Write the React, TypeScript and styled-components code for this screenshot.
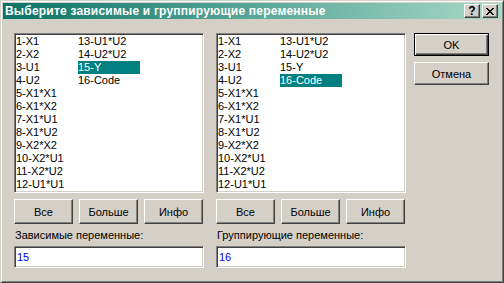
import React from "react";
import styled, { createGlobalStyle } from "styled-components";

const Global = createGlobalStyle`
  html, body { margin: 0; padding: 0; background: #d4d0c8; }
  body { font-family: "Liberation Sans", Arial, sans-serif; font-size: 11px; color: #000; }
`;

const Window = styled.div`
  box-sizing: border-box;
  width: 504px;
  height: 283px;
  background: #d4d0c8;
  border: 1px solid;
  border-color: #d4d0c8 #404040 #404040 #d4d0c8;
  box-shadow: inset 1px 1px #fff, inset -1px -1px #808080;
  padding: 2px;
  display: flex;
  flex-direction: column;
`;

const TitleBar = styled.div`
  height: 16px;
  flex: none;
  display: flex;
  align-items: center;
  padding: 0 3px 0 2px;
  background: linear-gradient(to right, #0a7367, #a8d9c7);
  color: #fff;
  font-family: "Liberation Sans", Arial, sans-serif;
  font-weight: bold;
  font-size: 12px;
  letter-spacing: 0.2px;
`;

const Title = styled.span`
  flex: 1;
  white-space: nowrap;
`;

const CapButton = styled.div<{ $gap?: boolean }>`
  box-sizing: border-box;
  width: 16px;
  height: 14px;
  background: #d4d0c8;
  border: 1px solid;
  border-color: #fff #404040 #404040 #fff;
  box-shadow: inset -1px -1px #808080;
  display: flex;
  align-items: center;
  justify-content: center;
  color: #000;
  font-family: "Liberation Sans", Arial, sans-serif;
  font-weight: bold;
  font-size: 12px;
  letter-spacing: 0;
  line-height: 1;
  margin-left: ${(p) => (p.$gap ? "2px" : "0")};
`;

const Body = styled.div`
  flex: 1;
  display: flex;
  align-items: flex-start;
  padding: 14px 0 0 11px;
  gap: 8px;
`;

const Panels = styled.div`
  display: flex;
  gap: 12px;
`;

const Column = styled.div`
  width: 190px;
  display: flex;
  flex-direction: column;
`;

const ListBox = styled.div`
  box-sizing: border-box;
  height: 160px;
  background: #fff;
  border: 1px solid;
  border-color: #808080 #fff #fff #808080;
  box-shadow: inset 1px 1px #404040, inset -1px -1px #d4d0c8;
  padding: 1px;
  display: grid;
  grid-auto-flow: column;
  grid-template-rows: repeat(12, 13px);
  grid-auto-columns: 62px;
  align-content: start;
  justify-content: start;
`;

const Item = styled.div<{ $sel?: boolean }>`
  height: 13px;
  line-height: 13px;
  white-space: nowrap;
  background: ${(p) => (p.$sel ? "#008080" : "transparent")};
  color: ${(p) => (p.$sel ? "#fff" : "#000")};
`;

const ButtonRow = styled.div`
  display: flex;
  gap: 6px;
  margin-top: 6px;
`;

const Button = styled.button<{ $w: number; $h: number; $default?: boolean }>`
  box-sizing: border-box;
  width: ${(p) => p.$w}px;
  height: ${(p) => p.$h}px;
  padding: 0;
  margin: 0;
  background: #d4d0c8;
  font-family: "Liberation Sans", Arial, sans-serif;
  font-size: 11px;
  color: #000;
  border: 1px solid;
  border-color: ${(p) => (p.$default ? "#000" : "#fff #404040 #404040 #fff")};
  box-shadow: ${(p) =>
    p.$default
      ? "inset 1px 1px #fff, inset -1px -1px #404040, inset -2px -2px #808080"
      : "inset -1px -1px #808080"};
`;

const Label = styled.div`
  margin-top: 5px;
  height: 13px;
  line-height: 13px;
  padding-left: 1px;
  white-space: nowrap;
`;

const Input = styled.div`
  box-sizing: border-box;
  margin-top: 4px;
  height: 22px;
  background: #fff;
  border: 1px solid;
  border-color: #808080 #fff #fff #808080;
  box-shadow: inset 1px 1px #404040, inset -1px -1px #d4d0c8;
  padding: 0 2px;
  display: flex;
  align-items: center;
  color: #0000ff;
`;

const SideButtons = styled.div`
  display: flex;
  flex-direction: column;
  gap: 6px;
`;

const items = [
  "1-X1",
  "2-X2",
  "3-U1",
  "4-U2",
  "5-X1*X1",
  "6-X1*X2",
  "7-X1*U1",
  "8-X1*U2",
  "9-X2*X2",
  "10-X2*U1",
  "11-X2*U2",
  "12-U1*U1",
  "13-U1*U2",
  "14-U2*U2",
  "15-Y",
  "16-Code",
];

const Panel = ({ sel, label, value }: { sel: number; label: string; value: string }) => (
  <Column>
    <ListBox>
      {items.map((t, i) => (
        <Item key={t} $sel={i === sel}>
          {t}
        </Item>
      ))}
    </ListBox>
    <ButtonRow>
      <Button $w={59} $h={25}>Все</Button>
      <Button $w={59} $h={25}>Больше</Button>
      <Button $w={59} $h={25}>Инфо</Button>
    </ButtonRow>
    <Label>{label}</Label>
    <Input>{value}</Input>
  </Column>
);

export default function App() {
  return (
    <>
      <Global />
      <Window>
        <TitleBar>
          <Title>Выберите зависимые и группирующие переменные</Title>
          <CapButton>?</CapButton>
          <CapButton $gap>
            <svg width="8" height="7" viewBox="0 0 8 7">
              <path d="M0 0h2v1h1v1h2V1h1V0h2v1H7v1H6v1H5v1h1v1h1v1h1v1H6V6H5V5H3v1H2v1H0V6h1V5h1V4h1V3H2V2H1V1H0z" fill="#000" />
            </svg>
          </CapButton>
        </TitleBar>
        <Body>
          <Panels>
            <Panel sel={14} label="Зависимые переменные:" value="15" />
            <Panel sel={15} label="Группирующие переменные:" value="16" />
          </Panels>
          <SideButtons>
            <Button $w={75} $h={23} $default>OK</Button>
            <Button $w={75} $h={23}>Отмена</Button>
          </SideButtons>
        </Body>
      </Window>
    </>
  );
}
